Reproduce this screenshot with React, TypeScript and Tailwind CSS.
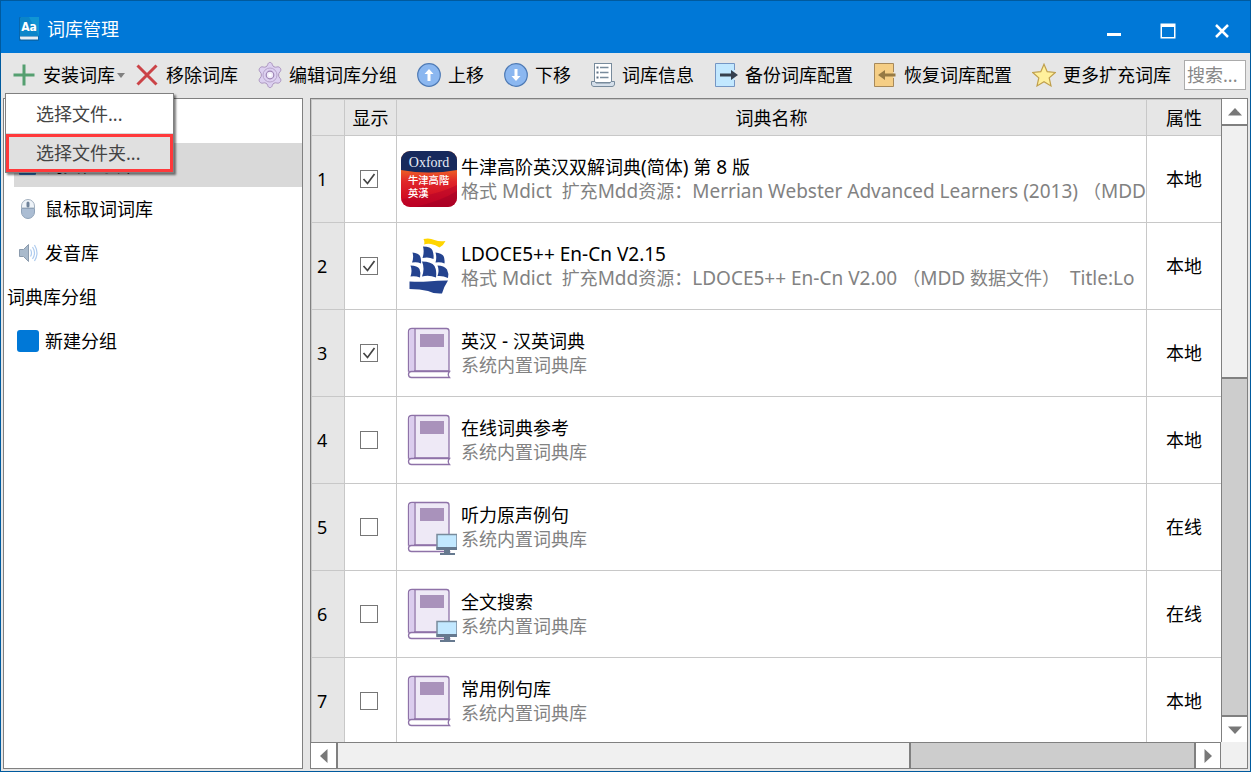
import React, { useState } from "react";

type IconProps = { className?: string };

const PlusIcon = () => (
  <svg width="24" height="24" viewBox="0 0 24 24">
    <path d="M12 1.500v21M1.500 12h21" stroke="#559f70" strokeWidth="3" fill="none" />
  </svg>
);

const CrossIcon = () => (
  <svg width="24" height="24" viewBox="0 0 24 24">
    <path d="M2.500 2.500l19 19M21.500 2.500l-19 19" stroke="#cb4347" strokeWidth="3" fill="none" />
  </svg>
);

const GearIcon = () => (
  <svg width="24" height="24" viewBox="0 0 24 24" overflow="visible">
    <path
      d="M12 -.6c1 0 2 .8 2.300 2.200.2 1 .8 1.700 1.700 2.200.9.5 1.900.5 2.800.2 1.500-.5 2.800.1 3.600 1.300.8 1.300.5 2.700-.6 3.700-.8.7-1.200 1.800-1.200 3s.4 2.300 1.200 3c1.100 1 1.400 2.400.6 3.700-.8 1.200-2.100 1.800-3.600 1.300-.9-.3-1.900-.3-2.800.2-.9.5-1.500 1.200-1.700 2.200-.3 1.400-1.300 2.200-2.300 2.200s-2-.8-2.300-2.200c-.2-1-.8-1.700-1.700-2.200-.9-.5-1.900-.5-2.800-.2-1.500.5-2.800-.1-3.600-1.300-.8-1.300-.5-2.700.6-3.700.8-.7 1.200-1.800 1.200-3s-.4-2.300-1.200-3c-1.100-1-1.400-2.400-.6-3.700.8-1.200 2.100-1.800 3.600-1.300.9.3 1.900.3 2.800-.2.9-.5 1.500-1.200 1.700-2.200C10 .2 11-.6 12-.6z"
      fill="#dcd0f0"
      stroke="#ab94c0"
      strokeWidth="1"
    />
    <circle cx="12" cy="12" r="7" fill="none" stroke="#b8a5cb" />
    <circle cx="12" cy="12" r="3.800" fill="#efeaf8" stroke="#9d84b5" strokeWidth="1.200" />
    <circle cx="12" cy="12" r="1.500" fill="#fff" />
  </svg>
);

const ArrowDisc = ({ down = false }: { down?: boolean }) => (
  <svg width="24" height="24" viewBox="0 0 24 24">
    <circle cx="12" cy="12" r="11.300" fill="#8bb7f0" stroke="#4e7ab5" strokeWidth="1.200" />
    <path
      d={down ? "M12 18l-4.500-5h3V6h3v7h3z" : "M12 6l4.500 5h-3v7h-3v-7h-3z"}
      fill="#fff"
    />
  </svg>
);

const ListIcon = () => (
  <svg width="24" height="24" viewBox="0 0 24 24">
    <rect x="3.500" y=".5" width="17" height="19" fill="#fff" stroke="#788b9c" />
    <path d="M9 4.500h8.500M9 9.500h8.500M9 14.500h8.500" stroke="#788b9c" strokeWidth="1.300" />
    <path d="M5.500 4.500h2M5.500 9.500h2M5.500 14.500h2" stroke="#5f7183" strokeWidth="2" />
    <path
      d="M.5 18.500h3.500l1 1.500h14l1-1.500h3.500v2.500c0 1.500-1 2.500-2.500 2.500H3c-1.500 0-2.500-1-2.500-2.500z"
      fill="#d5dfea"
      stroke="#788b9c"
    />
  </svg>
);

const BackupIcon = () => (
  <svg width="24" height="24" viewBox="0 0 24 24">
    <path d="M20.500 7V.5h-19v23h19V17" fill="#c2e8ff" stroke="#7496c4" />
    <path d="M6 10.500h11V7l7 5-7 5v-3.500H6z" fill="#36404d" />
  </svg>
);

const RestoreIcon = () => (
  <svg width="24" height="24" viewBox="0 0 24 24">
    <path d="M20.500 9V.5h-19v23h19V15" fill="#f5ce85" stroke="#a7895a" />
    <path d="M22.500 10.500H12V7l-7 5 7 5v-3.500h10.500z" fill="#967a44" />
  </svg>
);

const StarIcon = () => (
  <svg width="24" height="24" viewBox="0 0 24 24">
    <path
      d="M12 1.200l3.200 7.500 8.100.8-6.100 5.400 1.800 8L12 18.700l-7 4.200 1.800-8L.7 9.500l8.100-.8z"
      fill="#fff09c"
      stroke="#bf9f4d"
      strokeWidth="1.200"
    />
  </svg>
);

const AppIcon = () => (
  <svg width="20" height="24" viewBox="0 0 20 24">
    <rect x="0" y="0" width="20" height="24" rx="1" fill="#0767ae" />
    <path d="M2 0h18v19H1V1z" fill="#0b85c9" />
    <path d="M10 0h10v19z" fill="#1095d4" />
    <path d="M1 19.500h18v3H2c-1 0-1-2-1-3z" fill="#e5eef4" />
    <text
      x="10"
      y="14"
      textAnchor="middle"
      fontSize="12"
      fontWeight="700"
      fill="#fff"
      fontFamily="Liberation Sans Narrow, DejaVu Sans Condensed, Roboto, sans-serif"
    >
      Aa
    </text>
  </svg>
);

const BlueBookIcon = () => (
  <svg width="22" height="22" viewBox="0 0 22 22">
    <rect x="2" y="1" width="17" height="20" rx="1" fill="#2f6fb5" />
  </svg>
);

const MouseIcon = () => (
  <svg width="22" height="22" viewBox="0 0 22 22">
    <path d="M4.500 10V8a6.500 6.500 0 0 1 13 0v2z" fill="#eef3f8" stroke="#a2b0bf" />
    <path d="M4.500 10.500h13V14a6.500 6.500 0 0 1-13 0z" fill="#abbdd3" stroke="#8fa2b8" />
    <rect x="9.500" y="3.500" width="3" height="6" rx="1.500" fill="#6e8299" />
  </svg>
);

const SoundIcon = () => (
  <svg width="22" height="22" viewBox="0 0 22 22">
    <path d="M2.500 7.500h4l5-5v17l-5-5h-4z" fill="#a9bacc" stroke="#8b9bad" />
    <path
      d="M13.500 7.500q2 3.500 0 7M15.500 5q4 6 0 12M17.500 3q5 8 0 16"
      fill="none"
      stroke="#aecbee"
      strokeWidth="1.200"
    />
  </svg>
);

const BookIcon = ({ online = false }: { online?: boolean }) => (
  <svg width="56" height="56" viewBox="0 0 56 56" className="shrink-0">
    <path d="M11 3.500h34.500q2.500 0 2.500 2.500v40H7.500V7q0-3.500 3.500-3.500z" fill="#eee9f6" stroke="#8e72a8" strokeWidth="1.300" />
    <path d="M8.200 7q0-2.800 2.800-2.800h2V46H8.200z" fill="#dbcdee" />
    <path d="M14 4v42" stroke="#8e72a8" strokeWidth="1.300" />
    <rect x="19" y="9" width="24" height="13" fill="#a992bb" />
    <path
      d="M48.500 46.500H10.500a3 3 0 0 0 0 6h38q-2.500-3 0-6z"
      fill="#fff"
      stroke="#8e72a8"
      strokeWidth="1.300"
    />
    {online && (
      <g>
        <rect x="36" y="35.500" width="20" height="14.500" fill="#c2e8ff" stroke="#788b9c" strokeWidth="1.500" />
        <path d="M35.500 48h21v3h-21zM43 51h6v3h-6zM39 54h15v2H39z" fill="#66798f" />
      </g>
    )}
  </svg>
);

const OxfordIcon = () => (
  <svg width="56" height="56" viewBox="0 0 56 56" className="shrink-0">
    <defs>
      <clipPath id="oxford-tile">
        <rect width="56" height="56" rx="9" />
      </clipPath>
      <linearGradient id="oxford-red" x1="0" y1="0" x2="0" y2="1">
        <stop offset="0.300" stopColor="#ee6a25" />
        <stop offset=".55" stopColor="#e0262a" />
        <stop offset="1" stopColor="#c8001f" />
      </linearGradient>
    </defs>
    <g clipPath="url(#oxford-tile)">
      <rect width="56" height="56" fill="url(#oxford-red)" />
      <path d="M56 34Q34 45 0 48v8h56z" fill="#b0002a" opacity=".45" />
      <path d="M56 40Q40 50 14 56h42z" fill="#8c0026" opacity=".35" />
      <path d="M0 0h56v19Q28 24 0 19z" fill="#16295c" />
    </g>
    <text x="28" y="16" textAnchor="middle" fontSize="14" fill="#e8ecf6" fontFamily="Liberation Serif, serif">
      Oxford
    </text>
    <g fontSize="10.300" fontWeight="500" fill="#fff" fontFamily="Noto Sans CJK TC, sans-serif">
      <text x="7" y="33">牛津高階</text>
      <text x="7" y="46">英漢</text>
    </g>
  </svg>
);

const ShipIcon = () => (
  <svg width="56" height="56" viewBox="0 0 56 56" className="shrink-0">
    <path d="M22.500 1q6-1.500 11 1 5 2 11 1-2 4.500-6 6.500-4-3-8.500-3.500-4-.5-7 .5 1-2.500-.5-5.500z" fill="#ffd500" />
    <g fill="#24438f">
      <path d="M22 8.500q8 0 9.500 4 1.500 4 1 8.500-5-2.500-11-1 2-6 .5-11.500z" />
      <path d="M11.500 14.500q6 .5 7.500 3.500 1.500 3 1 7.500-4-2-9-1 2-5 .5-10z" />
      <path d="M34.500 14.500q6 .5 8 3.500 1.500 3 1 7.500-4-2-9-1 1.500-5 0-10z" />
      <path d="M9.500 27.500q7 0 9 3.500 1.500 3.500.5 8.500-5-2-9.500-1 2-6 0-11z" />
      <path d="M21 23.500q9.500 0 12.500 4.500 2.500 5 1.500 11.500-7-3-14-1 3-8 0-15z" />
      <path d="M36.500 27.500q6.500 0 9.500 4 2 4 1 8.500-5-2.500-10.500-2 2-5.500 0-10.500z" />
      <path d="M8.500 43.500q10 .5 18 0 10-1 20.500-1-4 6-6 13-8 .5-14-2.500-8-2-18.500-2z" />
    </g>
  </svg>
);

const Triangle = ({ className = "" }: IconProps) => (
  <svg width="14" height="8" viewBox="0 0 14 8" className={className}>
    <path d="M7 0l7 7.500H0z" fill="#787878" />
  </svg>
);

type Tool = { label: string; icon: React.ReactNode };

const tools: Tool[] = [
  { label: "移除词库", icon: <CrossIcon /> },
  { label: "编辑词库分组", icon: <GearIcon /> },
  { label: "上移", icon: <ArrowDisc /> },
  { label: "下移", icon: <ArrowDisc down /> },
  { label: "词库信息", icon: <ListIcon /> },
  { label: "备份词库配置", icon: <BackupIcon /> },
  { label: "恢复词库配置", icon: <RestoreIcon /> },
  { label: "更多扩充词库", icon: <StarIcon /> },
];

type Dict = { name: string; info: string; checked: boolean; place: string; icon: React.ReactNode };

const builtIn = "系统内置词典库";

const dicts: Dict[] = [
  {
    name: "牛津高阶英汉双解词典(简体) 第 8 版",
    info: "格式 Mdict  扩充Mdd资源：Merrian Webster Advanced Learners (2013) （MDD",
    checked: true,
    place: "本地",
    icon: <OxfordIcon />,
  },
  {
    name: "LDOCE5++ En-Cn V2.15",
    info: "格式 Mdict  扩充Mdd资源：LDOCE5++ En-Cn V2.00 （MDD 数据文件）  Title:Lo",
    checked: true,
    place: "本地",
    icon: <ShipIcon />,
  },
  { name: "英汉 - 汉英词典", info: builtIn, checked: true, place: "本地", icon: <BookIcon /> },
  { name: "在线词典参考", info: builtIn, checked: false, place: "本地", icon: <BookIcon /> },
  { name: "听力原声例句", info: builtIn, checked: false, place: "在线", icon: <BookIcon online /> },
  { name: "全文搜索", info: builtIn, checked: false, place: "在线", icon: <BookIcon online /> },
  { name: "常用例句库", info: builtIn, checked: false, place: "本地", icon: <BookIcon /> },
];

/* Latin runs are set one pixel larger than the Chinese text around them. */
function MixedText({ text }: { text: string }) {
  return (
    <>
      {text.split(/([\x20-\x7e]+)/).map((run, i) =>
        i % 2 ? (
          <span key={i} className="text-[19px] leading-none">
            {run}
          </span>
        ) : (
          run
        ),
      )}
    </>
  );
}

function TitleBar() {
  return (
    <header className="flex h-[52px] shrink-0 items-center bg-[#0078d7] pt-1 pr-px pl-[18px] text-white">
      <AppIcon />
      <h1 className="ml-2 flex-1">词库管理</h1>
      <button aria-label="最小化" className="flex h-8 w-[54px] items-center justify-center">
        <svg width="14" height="14" viewBox="0 0 14 14">
          <path d="M0 11h14v3H0z" fill="#fff" />
        </svg>
      </button>
      <button aria-label="最大化" className="flex h-8 w-[54px] items-center justify-center pt-1">
        <svg width="16" height="16" viewBox="0 0 16 16">
          <path d="M.5 .5h15v15H.5zM2 4v10h12V4z" fill="#fff" fillRule="evenodd" />
        </svg>
      </button>
      <button aria-label="关闭" className="flex h-8 w-[54px] items-center justify-center pt-1">
        <svg width="14" height="14" viewBox="0 0 14 14">
          <path d="M1 1l12 12M13 1L1 13" stroke="#fff" strokeWidth="2.500" />
        </svg>
      </button>
    </header>
  );
}

function Toolbar() {
  return (
    <div className="flex h-[45px] shrink-0 items-center bg-[#e6e6e6] pr-1 pb-px pl-px whitespace-nowrap">
      <div className="relative flex h-full items-center">
        <button className="flex items-center gap-[7px] pl-2.5">
          <PlusIcon />
          安装词库
        </button>
        <button aria-label="安装方式" className="flex h-8 w-2.5 items-center justify-end">
          <svg width="8" height="5" viewBox="0 0 8 5">
            <path d="M0 0h8L4 5z" fill="#808080" />
          </svg>
        </button>
        <div
          role="menu"
          className="absolute top-[40px] left-[3px] z-10 flex w-[169px] flex-col border border-[#808080] bg-white text-[#444] shadow-[2px_2px_2px_#00000080]"
        >
          <button role="menuitem" className="h-10 border-b border-[#d9d9d9] pl-[30px] text-left">
            选择文件...
          </button>
          <button
            role="menuitem"
            className="h-[38px] border-3 border-[#ff393b] bg-[#e0e0e0] pl-[27px] text-left"
          >
            选择文件夹...
          </button>
        </div>
      </div>
      {tools.map((t) => (
        <button key={t.label} className="flex items-center gap-[7px] px-2.5">
          {t.icon}
          {t.label}
        </button>
      ))}
      <input
        type="text"
        aria-label="搜索"
        placeholder="搜索..."
        className="ml-auto h-[30px] w-[62px] border border-[#ababab] bg-white pl-0.5 outline-none placeholder:text-[#888]"
      />
    </div>
  );
}

function SideItem({ icon, label, selected = false }: { icon: React.ReactNode; label: string; selected?: boolean }) {
  return (
    <li className="ml-2.5">
      <button
        className={
          "flex h-11 w-full items-center gap-1.5 pl-[3px] text-left " + (selected ? "bg-[#d9d9d9]" : "")
        }
      >
        {icon}
        {label}
      </button>
    </li>
  );
}

function Sidebar() {
  return (
    <nav className="w-[300px] shrink-0 overflow-hidden border border-[#808080] bg-white">
      <h2 className="flex h-11 items-center pl-[3px]">词典库</h2>
      <ul>
        <SideItem icon={<BlueBookIcon />} label="词典检索库" selected />
        <SideItem icon={<MouseIcon />} label="鼠标取词词库" />
        <SideItem icon={<SoundIcon />} label="发音库" />
      </ul>
      <h2 className="flex h-11 items-center pl-[3px]">词典库分组</h2>
      <ul>
        <SideItem icon={<span className="size-[22px] rounded-[3px] bg-[#0078d7]" />} label="新建分组" />
      </ul>
    </nav>
  );
}

function CheckCell({ name, initial }: { name: string; initial: boolean }) {
  const [on, setOn] = useState(initial);
  return (
    <label className="mr-1 grid place-items-center">
      <input
        type="checkbox"
        aria-label={name}
        checked={on}
        onChange={() => setOn(!on)}
        className="col-start-1 row-start-1 size-[18px] appearance-none border border-[#767676] bg-white"
      />
      {on && (
        <svg width="14" height="14" viewBox="0 0 14 14" className="pointer-events-none col-start-1 row-start-1">
          <path d="M1.500 7l4 4.500L12.500 2" fill="none" stroke="#444" strokeWidth="1.700" />
        </svg>
      )}
    </label>
  );
}

const line = "border-[#c8c8c8]";

function DictTable() {
  return (
    <div className="overflow-hidden bg-white">
      <table className="w-full table-fixed border-separate border-spacing-0">
        <colgroup>
          <col className="w-[34px]" />
          <col className="w-[52px]" />
          <col />
          <col className="w-[74px]" />
        </colgroup>
        <thead>
          <tr className="h-[37px] bg-[#e6e6e6]">
            <th className={"border-t border-r border-b border-l p-0 " + line} aria-label="序号" />
            <th className={"border-t border-r border-b p-0 font-normal " + line}>显示</th>
            <th className={"border-t border-r border-b p-0 font-normal " + line}>词典名称</th>
            <th className={"border-t border-b p-0 font-normal " + line}>属性</th>
          </tr>
        </thead>
        <tbody>
          {dicts.map((d, i) => (
            <tr key={d.name} className="h-[87px]">
              <th className={"border-r border-b border-l bg-[#e6e6e6] p-0 pl-[5px] text-left font-normal " + line}>
                {i + 1}
              </th>
              <td className={"border-r border-b p-0 " + line}>
                <CheckCell name={d.name} initial={d.checked} />
              </td>
              <td className={"border-r border-b p-0 pl-1 " + line}>
                <div className="flex items-center gap-1">
                  {d.icon}
                  <div className="min-w-0 overflow-hidden whitespace-pre">
                    <div className="h-6">
                      <MixedText text={d.name} />
                    </div>
                    <div className="h-6 text-[#828282]">
                      <MixedText text={d.info} />
                    </div>
                  </div>
                </div>
              </td>
              <td className={"border-b p-0 text-center " + line}>{d.place}</td>
            </tr>
          ))}
        </tbody>
      </table>
    </div>
  );
}

const edge = "border-[#808080]";

function VerticalScroll() {
  return (
    <div className={"flex min-h-0 flex-col border-l bg-[#cdcdcd] " + edge}>
      <button
        aria-label="向上滚动"
        className={"flex h-[27px] shrink-0 items-center justify-center border-b-2 bg-white " + edge}
      >
        <Triangle />
      </button>
      <div className={"h-[39.3%] shrink-0 border-b-2 bg-[#f0f0f0] " + edge} />
      <div className="flex-1" />
      <button
        aria-label="向下滚动"
        className={"flex h-[27px] shrink-0 items-center justify-center border-t-2 bg-white " + edge}
      >
        <Triangle className="rotate-180" />
      </button>
    </div>
  );
}

function HorizontalScroll() {
  return (
    <div className={"flex min-w-0 border-t bg-[#cdcdcd] " + edge}>
      <button
        aria-label="向左滚动"
        className={"flex w-[27px] shrink-0 items-center justify-center border-r-2 bg-white " + edge}
      >
        <Triangle className="-rotate-90" />
      </button>
      <div className={"w-[63%] border-r-2 bg-[#f0f0f0] " + edge} />
      <div className="flex-1" />
      <button
        aria-label="向右滚动"
        className={"flex w-[27px] shrink-0 items-center justify-center border-r border-l-2 bg-white " + edge}
      >
        <Triangle className="rotate-90" />
      </button>
    </div>
  );
}

export default function App() {
  return (
    <div className="flex h-screen flex-col overflow-hidden border border-[#005a9e] bg-[#f0f0f0] font-['Noto_Sans','Noto_Sans_CJK_SC',sans-serif] text-[18px] leading-6 text-black">
      <TitleBar />
      <Toolbar />
      <main className="flex min-h-0 flex-1 gap-[7px] bg-[#e6e6e6] px-0.5 pb-0.5">
        <Sidebar />
        <section className="grid min-w-0 flex-1 grid-cols-[minmax(0,1fr)_26px] grid-rows-[minmax(0,1fr)_26px] border border-[#808080] bg-[#f0f0f0]">
          <DictTable />
          <VerticalScroll />
          <HorizontalScroll />
        </section>
      </main>
    </div>
  );
}
